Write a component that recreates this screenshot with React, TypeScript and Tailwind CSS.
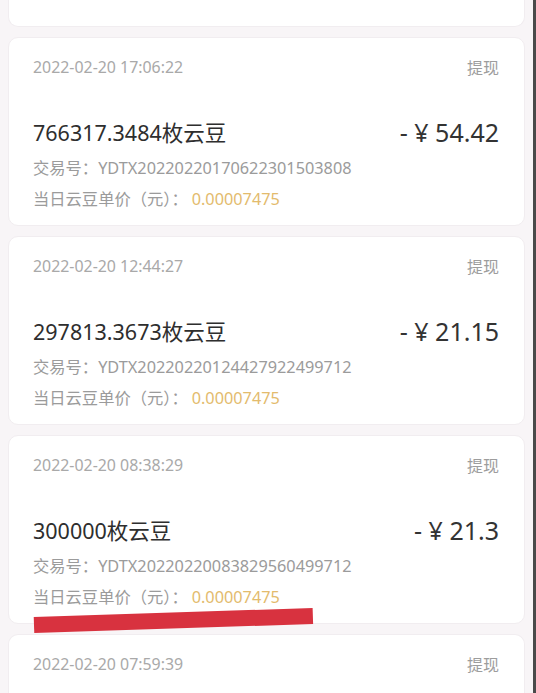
import React from "react";

const items = [
    { time: "2022-02-20 17:06:22", beans: "766317.3484枚云豆", amount: "54.42", no: "YDTX20220220170622301503808" },
    { time: "2022-02-20 12:44:27", beans: "297813.3673枚云豆", amount: "21.15", no: "YDTX20220220124427922499712" },
    { time: "2022-02-20 08:38:29", beans: "300000枚云豆", amount: "21.3", no: "YDTX20220220083829560499712", mark: true },
];

const font = { fontFamily: '"Noto Sans", "Noto Sans CJK SC", sans-serif' };

function Card({ item }: { item: (typeof items)[number] }) {
    return (
        <div className="relative shrink-0 h-[189px] rounded-[10px] bg-white border border-[#f1edf0] pl-[24px] pr-[25px] pt-[20px]">
            <div className="flex justify-between items-center h-[20px] text-[15.9px] text-[#a9a9a9]">
                <span>{item.time}</span>
                <span className="text-[#9d9d9d] text-[16px]">提现</span>
            </div>
            <div className="mt-[40px] flex justify-between items-center h-[30px]">
                <span className="text-[21.5px] text-[#2e2e2e]">{item.beans}</span>
                <span className="text-[25px] text-[#333]">- ¥ {item.amount}</span>
            </div>
            <div className="mt-[9px] h-[22px] flex items-center text-[16.3px] text-[#9b9b9b]">
                交易号：{item.no}
            </div>
            <div className="mt-[9px] h-[22px] flex items-center text-[16.3px] text-[#9b9b9b]">
                当日云豆单价（元）：<span className="ml-[4px] text-[#e3bb6d]">0.00007475</span>
            </div>
            {item.mark && (
                <div className="absolute left-[25px] top-[181px] w-[279px] h-[16px] bg-[#d8323f] origin-left rotate-[-1.85deg]" />
            )}
        </div>
    );
}

export default function App() {
    return (
        <div className="w-[536px] h-[693px] overflow-hidden flex bg-[#f8f5f7]" style={font}>
            <div className="flex-1 px-[8px] flex flex-col gap-[10px] -mt-[2px]">
                <div className="shrink-0 h-[29px] rounded-b-[10px] bg-white border border-t-0 border-[#f1edf0]" />
                {items.map(it => (
                    <Card key={it.time} item={it} />
                ))}
                <div className="shrink-0 h-[80px] rounded-t-[10px] bg-white border border-b-0 border-[#f1edf0] pl-[24px] pr-[25px] pt-[20px]">
                    <div className="flex justify-between items-center h-[20px] text-[15.9px] text-[#a9a9a9]">
                        <span>2022-02-20 07:59:39</span>
                        <span className="text-[#9d9d9d] text-[16px]">提现</span>
                    </div>
                </div>
            </div>
            <div className="w-[3px] bg-[#4a4a4a]" />
        </div>
    );
}
